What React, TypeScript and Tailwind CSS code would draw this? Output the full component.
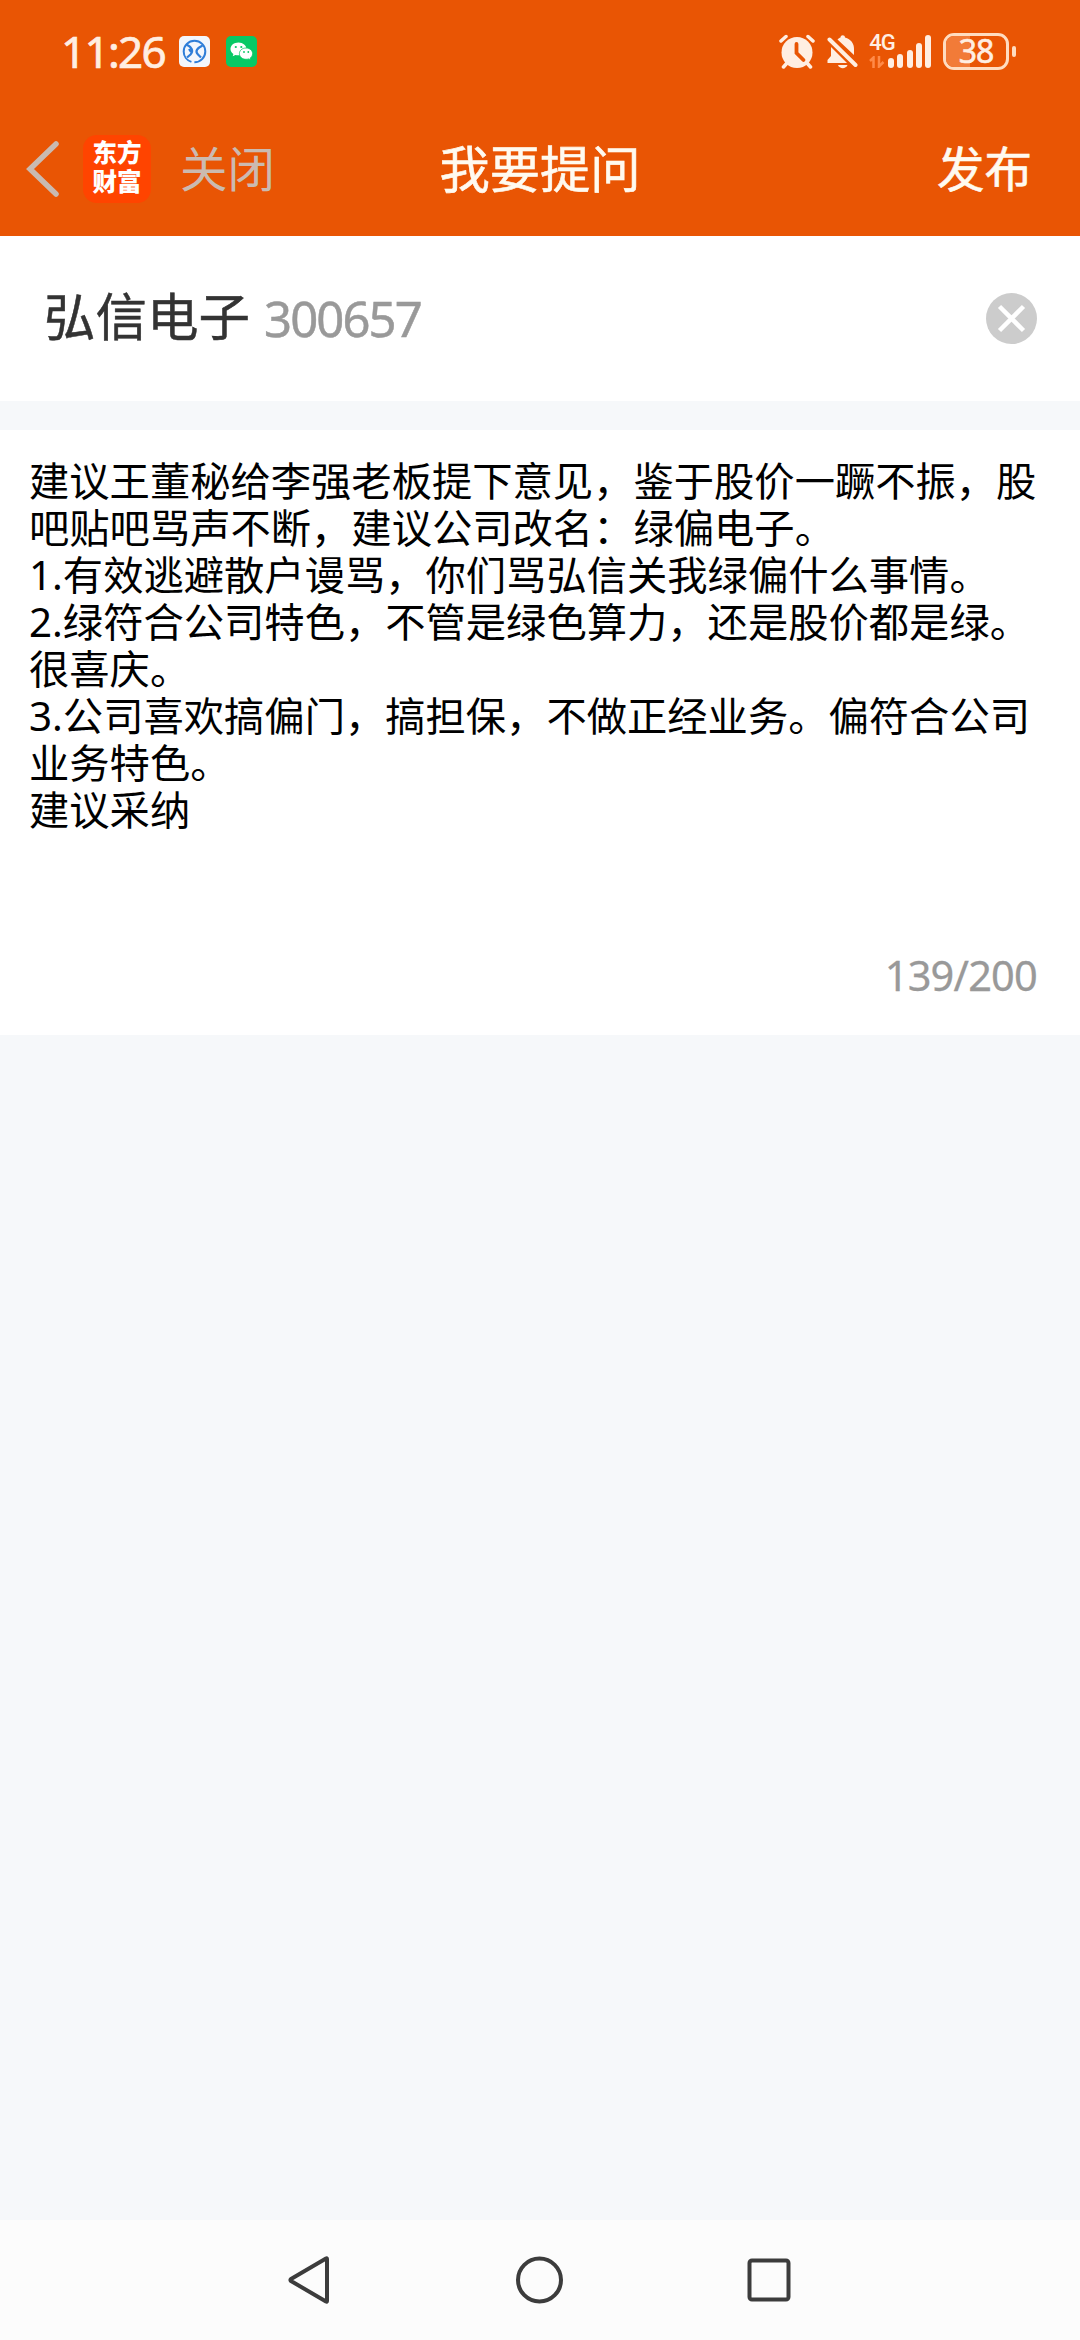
const lines = [
  "建议王董秘给李强老板提下意见，鉴于股价一蹶不振，股",
  "吧贴吧骂声不断，建议公司改名：绿偏电子。",
  "1.有效逃避散户谩骂，你们骂弘信关我绿偏什么事情。",
  "2.绿符合公司特色，不管是绿色算力，还是股价都是绿。",
  "很喜庆。",
  "3.公司喜欢搞偏门，搞担保，不做正经业务。偏符合公司",
  "业务特色。",
  "建议采纳"
];

const signalBars = [10, 14, 18, 25, 33];

function StatusBar() {
  return (
    <div className="flex h-[102px] shrink-0 items-center pl-[61px] pr-[64px] text-[#ffeee2]">
      <span className="w-[118px] whitespace-nowrap text-[44px] leading-none tracking-[-1.700px] [-webkit-text-stroke:0.700px_#ffeee2]">11:26</span>
      <svg className="h-[31px] w-[31px]" viewBox="0 0 31 31">
        <rect width="31" height="31" rx="5" fill="#f3f6fc" />
        <circle cx="15.500" cy="15.500" r="10.800" fill="none" stroke="#2f7dd8" strokeWidth="2" strokeDasharray="17 3 48" />
        <path d="M7.500 8.500c5 2.500 7.500 6 4 10l-3.500 3M23.500 9.500c-5 2.500-8 5.500-4.500 9l3 3M10 13l2 3" fill="none" stroke="#2f7dd8" strokeWidth="2.200" />
      </svg>
      <svg className="ml-4 h-[31px] w-[31px]" viewBox="0 0 31 31">
        <rect width="31" height="31" rx="5" fill="#07c965" />
        <path d="M12.500 6.500C8 6.500 4.500 9.300 4.500 13c0 2.100 1.100 3.900 2.900 5l-.7 2.200 2.700-1.300c1 .3 2 .4 3.100.4 4.500 0 8-2.800 8-6.300s-3.500-6.500-8-6.500z" fill="#fff" />
        <path d="M20 12c-3.800 0-6.600 2.500-6.600 5.600 0 3.200 2.800 5.700 6.600 5.700.9 0 1.700-.1 2.500-.4l2.200 1.200-.6-1.900c1.600-1 2.500-2.700 2.500-4.600 0-3.100-2.900-5.600-6.600-5.600z" fill="#fff" stroke="#07c965" strokeWidth="0.800" />
        <g fill="#07c965">
          <circle cx="9.800" cy="11" r="1.100" />
          <circle cx="15.300" cy="11" r="1.100" />
          <circle cx="18" cy="16" r="0.900" />
          <circle cx="22.300" cy="16" r="0.900" />
        </g>
      </svg>

      <div className="ml-auto flex items-center">
        {/* Alarm */}
        <svg className="h-[35px] w-9" viewBox="0 0 36 35" fill="none" stroke="currentColor" strokeLinecap="round">
          <circle cx="18" cy="18.500" r="15.500" fill="currentColor" stroke="none" />
          <path d="M2 7l5-4.500M34 7l-5-4.500M8 29l-3.500 4M28 29l3.500 4" strokeWidth="3.500" />
          <path d="M17.500 10v9l7 7" stroke="#e95504" strokeWidth="3.800" />
        </svg>
        {/* Muted bell */}
        <svg className="ml-3 h-[35px] w-[31px]" viewBox="0 0 31 35" fill="currentColor">
          <path d="M10.500 5.500C11.700 4.500 12.500 4 13.500 3.600 13.500 .4 18 .4 18 3.600c6 1.800 9 6 9 11.400v6z" />
          <path d="M4 13L20 29H.500v-3L4 22z" />
          <path d="M11 31h9.500c-1.500 4.200-8 4.200-9.500 0z" />
          <path d="M2.500 5.500L28.500 31" stroke="currentColor" strokeWidth="4" strokeLinecap="round" />
        </svg>
        <div className="ml-[11px] flex h-[34px] items-end">
          <div className="flex h-full w-[19px] flex-col justify-between">
            <span className="whitespace-nowrap font-['Roboto',sans-serif] text-[22px] font-medium leading-[18px] tracking-[-1px]">4G</span>
            <svg className="h-3 w-4" viewBox="0 0 16 12" fill="none" stroke="#ff8a48" strokeWidth="2.500">
              <path d="M1 5l3.500-3.500V12M10 0v10.500L14.500 6" />
            </svg>
          </div>
          <div className="flex items-end gap-[3.200px]">
            {signalBars.map(height => (
              <span key={height} className="w-[6px] rounded-full bg-[#ffeee2]" style={{ height }} />
            ))}
          </div>
        </div>
        <div className="ml-3 flex items-center gap-[3px]">
          <div className="relative flex h-[37px] w-[66px] items-center justify-center rounded-[11px] border-[3px] border-[#ffdcc0]">
            <div className="absolute inset-y-0 left-0 w-6 rounded-l-lg bg-[#f27b38]" />
            <span className="relative text-[32px] leading-none tracking-[-1px] [-webkit-text-stroke:0.600px_#ffeee2]">38</span>
          </div>
          <span className="h-[11px] w-1 rounded-full bg-[#ffdcc0]" />
        </div>
      </div>
    </div>
  );
}

function TitleBar() {
  return (
    <div className="grid h-[134px] grid-cols-[1fr_auto_1fr] items-center px-[26px]">
      <div className="flex items-center">
        <svg className="h-[56px] w-[34px]" viewBox="0 0 34 56" fill="none" stroke="#c9bab1" strokeWidth="5.500">
          <path d="M30 3L4 28l26 25" strokeLinecap="round" />
        </svg>
        <div className="ml-[23px] flex h-[68px] w-[68px] flex-col items-center justify-center rounded-[14px] bg-[#ff4400] pb-1 text-[24.500px] font-black leading-[29px] text-white">
          <span>东方</span>
          <span>财富</span>
        </div>
        <span className="ml-[29px] text-[47.500px] leading-none text-[#cbbab0]">关闭</span>
      </div>
      <h1 className="text-[50.300px] leading-none text-[#fffaf0] [-webkit-text-stroke:0.600px_#fffaf0]">我要提问</h1>
      <span className="mr-[22px] justify-self-end text-[47.500px] leading-none text-[#fffaf0] [-webkit-text-stroke:0.600px_#fffaf0]">发布</span>
    </div>
  );
}

function NavBar() {
  return (
    <nav className="flex h-[120px] items-center justify-between bg-[#fcfcfc] pl-[287px] pr-[287px]">
      <svg className="h-[50px] w-[46px]" viewBox="0 0 46 50" fill="none" stroke="#3c3c3c" strokeWidth="4" strokeLinejoin="round">
        <path d="M40 4v42q0 1-1 .500L4 26q-1-1 0-2L39 3.500q1-.500 1 .500z" />
      </svg>
      <svg className="h-12 w-12" viewBox="0 0 48 48" fill="none" stroke="#3c3c3c" strokeWidth="4">
        <circle cx="24.500" cy="24" r="21.500" />
      </svg>
      <svg className="h-12 w-12" viewBox="0 0 48 48" fill="none" stroke="#3c3c3c" strokeWidth="4">
        <rect x="4.500" y="4.500" width="39" height="39" rx="2.500" />
      </svg>
    </nav>
  );
}

export default function App() {
  return (
    <div className="flex h-[2340px] w-[1080px] flex-col overflow-hidden bg-[#f6f8fa] font-['Noto_Sans','Noto_Sans_CJK_SC',sans-serif]">
      <header className="h-[236px] shrink-0 bg-[#e95504]">
        <StatusBar />
        <TitleBar />
      </header>

      {/* Selected stock */}
      <section className="flex h-[165px] shrink-0 items-center bg-white pl-[44px] pr-[43px]">
        <span className="pb-1 text-[51.500px] leading-none text-[#333] [-webkit-text-stroke:0.500px_#333]">弘信电子</span>
        <span className="ml-[14px] text-[49px] leading-none tracking-[-1.900px] text-[#999] [-webkit-text-stroke:0.500px_#999]">300657</span>
        <svg className="ml-auto h-[51px] w-[51px]" viewBox="0 0 51 51">
          <circle cx="25.500" cy="25.500" r="25.500" fill="#ccc" />
          <path d="M13.500 13.500l24 24M37.500 13.500l-24 24" stroke="#fff" strokeWidth="4.500" />
        </svg>
      </section>

      {/* Question */}
      <section className="mt-[29px] flex h-[605px] shrink-0 flex-col justify-between bg-white px-[29px] pb-[32px] pt-[27px]">
        <div className="text-[40.300px] leading-[47px] text-black">
          {lines.map(line => (
            <p key={line} className="h-[47px] whitespace-nowrap">{line}</p>
          ))}
        </div>
        <span className="mr-[14px] self-end text-[41.500px] leading-[56px] tracking-[-0.800px] text-[#999] [-webkit-text-stroke:0.300px_#999]">139/200</span>
      </section>

      <div className="flex-1" />
      <NavBar />
    </div>
  );
}
